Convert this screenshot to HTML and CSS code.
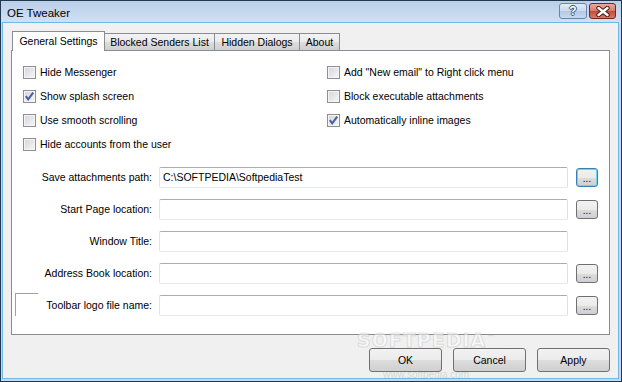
FILE: index.html
```html
<!DOCTYPE html>
<html lang="en">
<head>
    <meta charset="UTF-8">
    <title>OE Tweaker</title>
    <link rel="stylesheet" href="styles.css">
</head>
<body>
    <div class="window">
        <div class="titlebar">
            <span class="title">OE Tweaker</span>
            <div class="caption-buttons">
                <span class="cap help"><span class="qmark">?</span></span>
                <span class="cap close">
                    <svg width="14" height="11" viewBox="0 0 14 11">
                        <path d="M2.5 2 L11.5 9 M11.5 2 L2.5 9" stroke="#4a1a14" stroke-width="4.4" stroke-linecap="round" fill="none"/>
                        <path d="M2.5 2 L11.5 9 M11.5 2 L2.5 9" stroke="#fff" stroke-width="2.4" stroke-linecap="round" fill="none"/>
                    </svg>
                </span>
            </div>
        </div>

        <div class="client">
            <div class="tabs">
                <div class="tab selected">General Settings</div>
                <div class="tab w-blocked">Blocked Senders List</div>
                <div class="tab w-hidden">Hidden Dialogs</div>
                <div class="tab w-about">About</div>
            </div>

            <div class="panel">
                <div class="checks">
                    <div class="check-col left-col">
                        <label class="check"><span class="box"></span>Hide Messenger</label>
                        <label class="check"><span class="box checked"><svg width="11" height="11" viewBox="0 0 11 11"><path d="M1.8 5.2 L4.2 8.4 L9.2 1.6" stroke="#4a5e9c" stroke-width="2" fill="none"/></svg></span>Show splash screen</label>
                        <label class="check"><span class="box"></span>Use smooth scrolling</label>
                        <label class="check"><span class="box"></span>Hide accounts from the user</label>
                    </div>
                    <div class="check-col">
                        <label class="check"><span class="box"></span>Add "New email" to Right click menu</label>
                        <label class="check"><span class="box"></span>Block executable attachments</label>
                        <label class="check"><span class="box checked"><svg width="11" height="11" viewBox="0 0 11 11"><path d="M1.8 5.2 L4.2 8.4 L9.2 1.6" stroke="#4a5e9c" stroke-width="2" fill="none"/></svg></span>Automatically inline images</label>
                    </div>
                </div>

                <div class="fields">
                    <div class="field-row">
                        <div class="field-label"><span>Save attachments path:</span></div>
                        <input class="textbox" type="text" value="C:\SOFTPEDIA\SoftpediaTest">
                        <span class="browse focused">...</span>
                    </div>
                    <div class="field-row">
                        <div class="field-label"><span>Start Page location:</span></div>
                        <input class="textbox" type="text" value="">
                        <span class="browse">...</span>
                    </div>
                    <div class="field-row">
                        <div class="field-label"><span>Window Title:</span></div>
                        <input class="textbox" type="text" value="">
                    </div>
                    <div class="field-row">
                        <div class="field-label"><span>Address Book location:</span></div>
                        <input class="textbox" type="text" value="">
                        <span class="browse">...</span>
                    </div>
                    <div class="field-row">
                        <div class="field-label"><span class="logo-frame"></span><span>Toolbar logo file name:</span></div>
                        <input class="textbox" type="text" value="">
                        <span class="browse">...</span>
                    </div>
                </div>
            </div>

            <div class="footer">
                <span class="push">OK</span>
                <span class="push">Cancel</span>
                <span class="push">Apply</span>
            </div>
        </div>

        <div class="watermark">
            <span class="wm-big">SOFTPEDIA<sup>™</sup></span>
            <span class="wm-small">www.softpedia.com</span>
        </div>
    </div>
</body>
</html>
```

FILE: styles.css
```css
body {
    margin: 0;
    font-family: 'Liberation Sans', Arial, sans-serif;
    font-size: 10.5px;
    color: #000;
    background: #f0f0f0;
}
.window {
    position: relative;
    width: 622px;
    height: 382px;
    box-sizing: border-box;
    border: 1px solid #22384f;
    padding: 0 3px 3px 2px;
    background: #c4d8ef;
    display: flex;
    flex-direction: column;
}
.titlebar {
    height: 22px;
    flex: none;
    display: flex;
    align-items: center;
    background: linear-gradient(#b9cfe9, #d2e1f3);
    margin: 0 -3px 0 -2px;
    padding: 0 5px 0 6px;
}
.title {
    font-size: 11.5px;
    flex: 1;
    padding-top: 1px;
}
.caption-buttons {
    display: flex;
    gap: 2px;
    align-self: flex-start;
    margin-top: 2px;
}
.cap {
    height: 16px;
    box-sizing: border-box;
    border-radius: 3px;
    display: flex;
    align-items: center;
    justify-content: center;
}
.help {
    width: 28px;
    border: 1px solid #6c84a6;
    background: linear-gradient(#e4ecf7 0%, #c8d8ee 50%, #b2c7e3 51%, #c9daf0 100%);
}
.qmark {
    color: #fff;
    font-weight: bold;
    font-size: 12px;
    line-height: 12px;
    text-shadow: 1px 0 0 #3c4f6c, -1px 0 0 #3c4f6c, 0 1px 0 #3c4f6c, 0 -1px 0 #3c4f6c;
}
.close {
    width: 27px;
    border: 1px solid #6e2a20;
    background: linear-gradient(#e8aa9f 0%, #d77b6c 50%, #c54a37 51%, #d9786a 100%);
}
.client {
    flex: 1;
    background: #f0f0f0;
    box-shadow: 0 0 0 1px #6cb8e6;
    display: flex;
    flex-direction: column;
}
.tabs {
    display: flex;
    align-items: flex-end;
    margin: 8px 0 0 9px;
    position: relative;
    z-index: 1;
}
.tab {
    height: 17px;
    box-sizing: border-box;
    border: 1px solid #898c95;
    border-bottom: none;
    margin-left: -1px;
    background: linear-gradient(#f3f3f3 0%, #ebebeb 50%, #dddddd 51%, #cfcfcf 100%);
    text-align: center;
    line-height: 17px;
}
.tab.selected {
    width: 93px;
    height: 20px;
    margin-left: 0;
    margin-bottom: -1px;
    background: #fff;
    line-height: 19px;
    position: relative;
    z-index: 1;
}
.w-blocked {
    width: 111px;
}
.w-hidden {
    width: 86px;
}
.w-about {
    width: 41px;
}
.panel {
    margin: 0 8px;
    height: 285px;
    box-sizing: border-box;
    border: 1px solid #898c95;
    background: #fff;
}
.checks {
    display: flex;
    padding: 15px 0 0 11px;
}
.check-col {
    display: flex;
    flex-direction: column;
    gap: 11px;
}
.left-col {
    width: 304px;
}
.check {
    display: flex;
    align-items: center;
    gap: 4px;
    height: 13px;
    line-height: 13px;
}
.box {
    width: 13px;
    height: 13px;
    box-sizing: border-box;
    border: 1px solid #8e8f8f;
    background: linear-gradient(135deg, #d2d5da, #f7f7f7);
    box-shadow: inset 0 0 0 1px #f4f4f4;
    display: flex;
    align-items: center;
    justify-content: center;
}
.fields {
    margin-top: 16px;
    display: flex;
    flex-direction: column;
    gap: 11px;
}
.field-row {
    display: flex;
    height: 21px;
}
.field-label {
    width: 147px;
    box-sizing: border-box;
    padding: 0 7px 1px 0;
    display: flex;
    align-items: center;
}
.field-label span:last-child {
    margin-left: auto;
}
.logo-frame {
    align-self: flex-start;
    width: 23px;
    height: 23px;
    box-sizing: border-box;
    margin: -2px 0 0 3px;
    border-top: 1px solid #a0a0a0;
    border-left: 1px solid #a0a0a0;
}
.textbox {
    width: 409px;
    height: 21px;
    box-sizing: border-box;
    margin: 0;
    padding: 0 3px 1px;
    border: 1px solid;
    border-color: #abadb3 #dbdfe6 #e3e9ef #e2e3ea;
    border-radius: 2px;
    font-family: 'Liberation Sans', Arial, sans-serif;
    font-size: 10.5px;
    color: #000;
    background: #fff;
    outline: none;
}
.browse {
    width: 22px;
    height: 19px;
    margin: 1px 0 0 8px;
    box-sizing: border-box;
    border: 1px solid #707070;
    border-radius: 3px;
    background: linear-gradient(#f2f2f2 0%, #ebebeb 50%, #dddddd 51%, #cfcfcf 100%);
    text-align: center;
    line-height: 19px;
    font-size: 10px;
}
.browse.focused {
    border-color: #3c7fb1;
    box-shadow: inset 0 0 0 1px #67d5fa;
}
.footer {
    display: flex;
    justify-content: flex-end;
    gap: 11px;
    margin: 13px 8px 0 0;
}
.push {
    width: 73px;
    height: 24px;
    box-sizing: border-box;
    padding-top: 4px;
    border: 1px solid #707070;
    border-radius: 3px;
    background: linear-gradient(#f2f2f2 0%, #ebebeb 50%, #dddddd 51%, #cfcfcf 100%);
    text-align: center;
    line-height: 14px;
}
.watermark {
    position: absolute;
    left: 356px;
    top: 331px;
    display: flex;
    flex-direction: column;
    align-items: center;
    pointer-events: none;
    color: rgba(255, 255, 255, 0.55);
}
.wm-big {
    font-family: 'DejaVu Sans', sans-serif;
    font-weight: bold;
    font-size: 19px;
    letter-spacing: 1px;
    line-height: 17px;
    -webkit-text-stroke: 1px rgba(170, 170, 170, 0.35);
}
.wm-big sup {
    font-size: 8px;
    line-height: 0;
    -webkit-text-stroke: 0;
    color: rgba(150, 150, 150, 0.4);
}
.wm-small {
    font-size: 10px;
    line-height: 11px;
    margin-top: 20px;
    color: rgba(160, 160, 160, 0.35);
}
```
